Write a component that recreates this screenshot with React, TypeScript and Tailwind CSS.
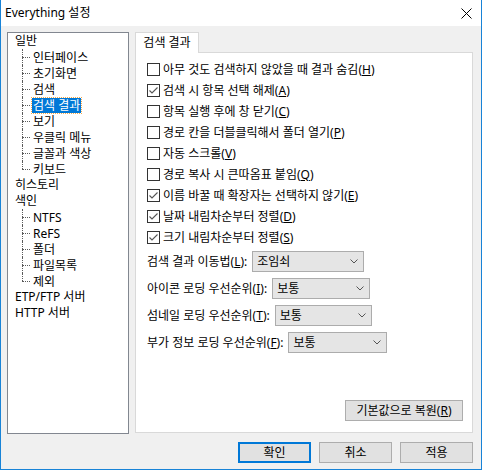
import React from "react";

const checks = [
  { label: "아무 것도 검색하지 않았을 때 결과 숨김", key: "H", checked: false },
  { label: "검색 시 항목 선택 해제", key: "A", checked: true },
  { label: "항목 실행 후에 창 닫기", key: "C", checked: false },
  { label: "경로 칸을 더블클릭해서 폴더 열기", key: "P", checked: false },
  { label: "자동 스크롤", key: "V", checked: false },
  { label: "경로 복사 시 큰따옴표 붙임", key: "Q", checked: false },
  { label: "이름 바꿀 때 확장자는 선택하지 않기", key: "E", checked: true },
  { label: "날짜 내림차순부터 정렬", key: "D", checked: true },
  { label: "크기 내림차순부터 정렬", key: "S", checked: true },
];

const selects = [
  { label: "검색 결과 이동법", key: "L", value: "조임쇠", w: "w-[112px]" },
  { label: "아이콘 로딩 우선순위", key: "I", value: "보통", w: "w-[98px]" },
  { label: "섬네일 로딩 우선순위", key: "T", value: "보통", w: "w-[97px]" },
  { label: "부가 정보 로딩 우선순위", key: "F", value: "보통", w: "w-[99px]" },
];

const general = ["인터페이스", "초기화면", "검색", "검색 결과", "보기", "우클릭 메뉴", "글꼴과 색상", "키보드"];
const index = ["NTFS", "ReFS", "폴더", "파일목록", "제외"];

function Mn({ k }: { k: string }) {
  return (
    <>
      (<u>{k}</u>)
    </>
  );
}

function TreeChild({ label, last, selected }: { label: string; last: boolean; selected?: boolean }) {
  return (
    <div className="flex h-[16px] items-center pl-[14px]">
      <div className="relative h-[16px] w-[9px] shrink-0">
        <div
          className={`absolute left-0 top-0 border-l border-dotted border-[#5a5a5a] ${last ? "h-[8px]" : "h-[16px]"}`}
        />
        <div className="absolute left-0 top-[8px] w-[8px] border-t border-dotted border-[#5a5a5a]" />
      </div>
      <span
        className={`ml-px px-[1px] leading-[15px] ${
          selected ? "bg-[#0078d7] text-white outline outline-1 outline-dotted outline-[#f6a94a]" : ""
        }`}
      >
        {label}
      </span>
    </div>
  );
}

function TreeRoot({ label }: { label: string }) {
  return <div className="flex h-[16px] items-center pl-[7px]">{label}</div>;
}

function Checkbox({ checked }: { checked: boolean }) {
  return (
    <div className="flex h-[13px] w-[13px] shrink-0 items-center justify-center border border-[#333] bg-white">
      {checked && (
        <svg width="11" height="11" viewBox="0 0 11 11">
          <polyline points="1.5,5.5 4,8 9.5,2.5" fill="none" stroke="#555" strokeWidth="1.1" />
        </svg>
      )}
    </div>
  );
}

function Select({ value, w }: { value: string; w: string }) {
  return (
    <div className={`flex h-[21px] ${w} items-center justify-between border border-[#acacac] bg-[#e5e5e5] pl-[4px] pr-[5px]`}>
      <span>{value}</span>
      <svg width="8" height="5" viewBox="0 0 8 5">
        <polyline points="0.5,0.5 4,4 7.5,0.5" fill="none" stroke="#555" strokeWidth="1" />
      </svg>
    </div>
  );
}

function WinButton({ label, primary }: { label: React.ReactNode; primary?: boolean }) {
  return (
    <button
      className={`flex h-[21px] w-[73px] items-center justify-center bg-[#e1e1e1] ${
        primary ? "border-2 border-[#0078d7]" : "border border-[#adadad]"
      }`}
    >
      {label}
    </button>
  );
}

export default function App() {
  return (
    <div className="flex h-[470px] w-[482px] flex-col border-x border-b border-[#1883d7] bg-[#f0f0f0] font-['Noto_Sans','Noto_Sans_CJK_KR',sans-serif] text-[12px] text-black">
      <div className="flex h-[26px] shrink-0 items-center justify-between bg-white pl-[4px] pr-[9px]">
        <span className="text-[12px]">Everything 설정</span>
        <svg width="11" height="11" viewBox="0 0 11 11">
          <line x1="0.5" y1="0.5" x2="10.5" y2="10.5" stroke="#000" strokeWidth="1" />
          <line x1="10.5" y1="0.5" x2="0.5" y2="10.5" stroke="#000" strokeWidth="1" />
        </svg>
      </div>

      <div className="flex flex-1 flex-col pl-[6px] pr-[8px] pt-[6px]">
        <div className="flex h-[402px] gap-[6px]">
          <div className="flex h-[402px] w-[122px] flex-col border border-[#828790] bg-white">
            <TreeRoot label="일반" />
            {general.map((g, i) => (
              <TreeChild key={g} label={g} last={i === general.length - 1} selected={g === "검색 결과"} />
            ))}
            <TreeRoot label="히스토리" />
            <TreeRoot label="색인" />
            {index.map((g, i) => (
              <TreeChild key={g} label={g} last={i === index.length - 1} />
            ))}
            <TreeRoot label="ETP/FTP 서버" />
            <TreeRoot label="HTTP 서버" />
          </div>

          <div className="flex h-[401px] w-[338px] flex-col">
            <div className="relative z-10 -mb-px flex h-[21px] w-[64px] items-center justify-center border-x border-t border-[#d9d9d9] bg-white">
              검색 결과
            </div>
            <div className="flex flex-1 flex-col border border-[#d9d9d9] bg-white pl-[11px] pt-[6px]">
              {checks.map((c) => (
                <div key={c.key} className="flex h-[21px] items-center gap-[3px]">
                  <Checkbox checked={c.checked} />
                  <span>
                    {c.label}
                    <Mn k={c.key} />
                  </span>
                </div>
              ))}
              <div className="mt-[3px] flex flex-col gap-[6px]">
                {selects.map((s) => (
                  <div key={s.key} className="flex h-[21px] items-center gap-[5px]">
                    <span>
                      {s.label}
                      <Mn k={s.key} />:
                    </span>
                    <Select value={s.value} w={s.w} />
                  </div>
                ))}
              </div>
              <div className="mb-[11px] mr-[9px] mt-auto flex justify-end">
                <button className="flex h-[21px] w-[118px] items-center justify-center border border-[#adadad] bg-[#e1e1e1]">
                  기본값으로 복원<Mn k="R" />
                </button>
              </div>
            </div>
          </div>
        </div>

        <div className="mt-[8px] flex justify-end gap-[8px]">
          <WinButton label="확인" primary />
          <WinButton label="취소" />
          <WinButton label="적용" />
        </div>
      </div>
    </div>
  );
}
